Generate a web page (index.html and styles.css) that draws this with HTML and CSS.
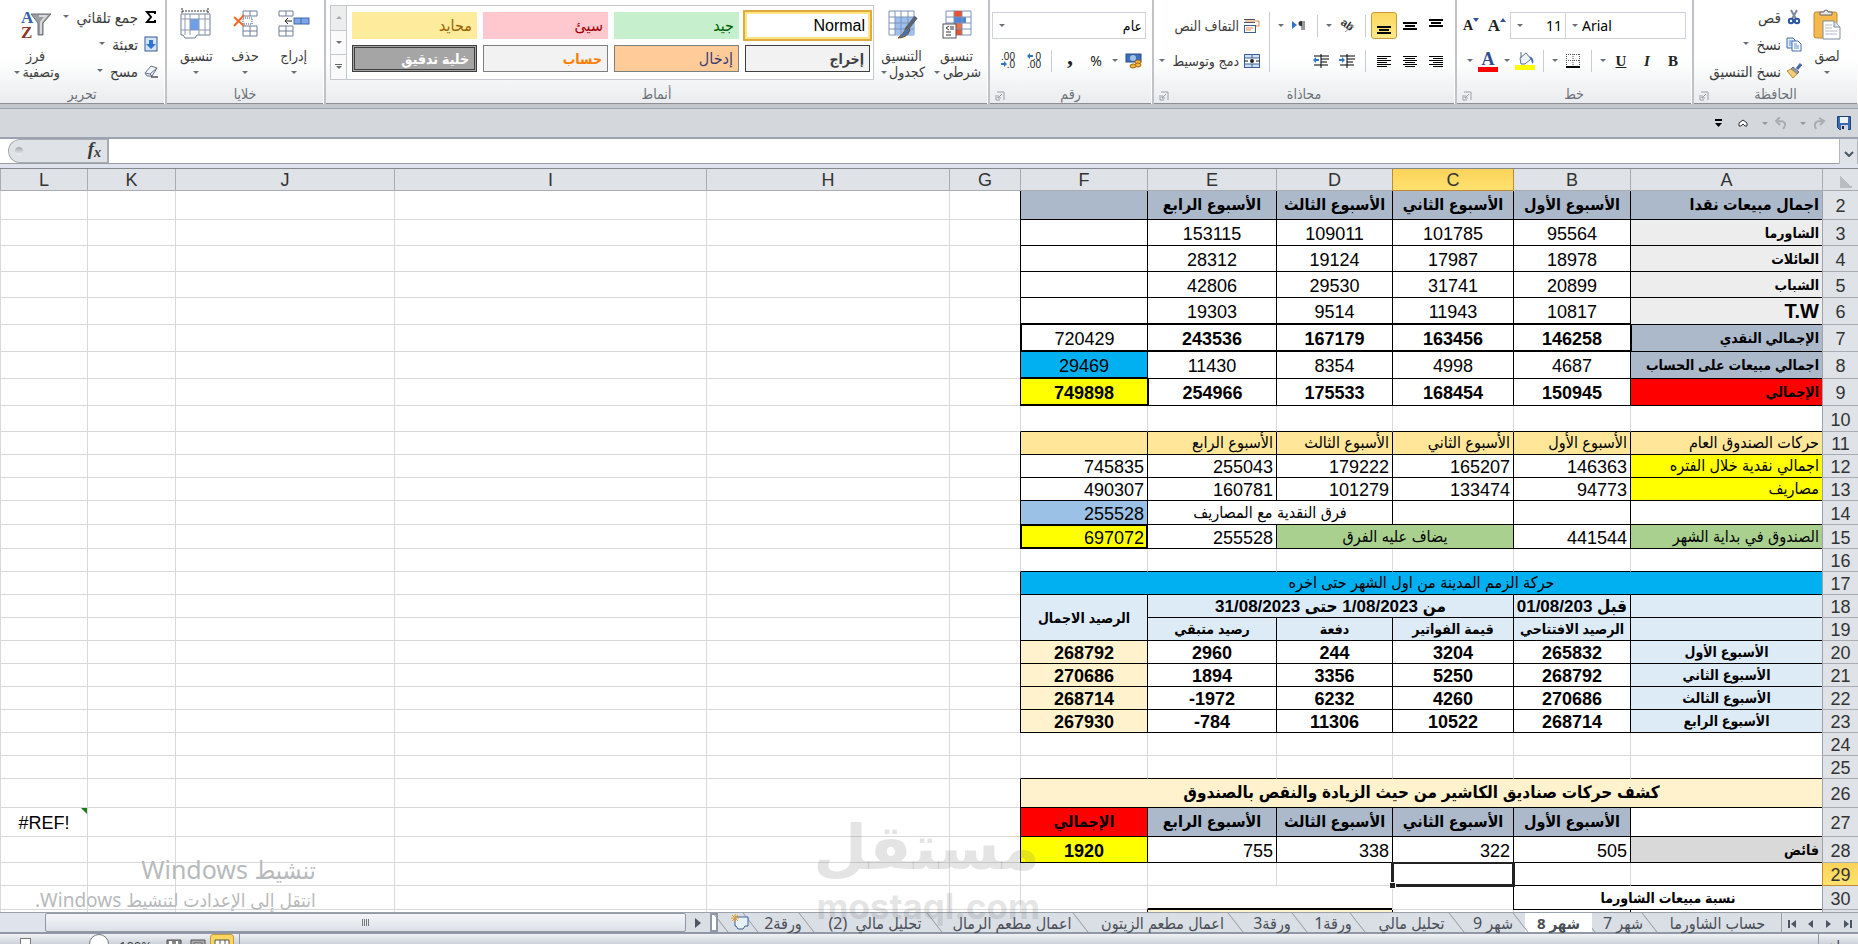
FILE: index.html
```html
<!DOCTYPE html>
<html lang="ar" dir="rtl">
<head>
  <meta charset="UTF-8">
  <meta name="viewport" content="width=device-width, initial-scale=1.0">
  <title>شهر 8</title>
  <link rel="stylesheet" href="styles.css">
</head>
<body>
  <header class="ribbon">
    <section class="group clipboard">
      <div class="group-body">
        <button class="big">
          <svg width="28" height="32" viewBox="0 0 28 32"><rect x="1" y="4" width="23" height="26" rx="2" fill="#f5b84c" stroke="#b98a3a"/><path d="M7 7V4h4a2 2 0 0 1 4 0h4v3z" fill="#e8e8e8" stroke="#666"/><path d="M10 13h11l6 6v12H10z" fill="#fff" stroke="#7d8ba0"/><path d="M21 13v6h6" fill="#dde5ee" stroke="#7d8ba0"/><path d="M12 17h7M12 20h7M12 23h12M12 26h12" stroke="#b4bcc8"/></svg>
          <span>لصق</span>
          <i class="caret"></i>
        </button>
        <div class="stack">
          <button class="small"><svg width="16" height="16" viewBox="0 0 16 16"><path d="M5 1l5 9M11 1L6 10" stroke="#7c8a9c" stroke-width="2"/><circle cx="5" cy="12" r="2.200" fill="none" stroke="#2a55a0" stroke-width="2"/><circle cx="11" cy="12" r="2.200" fill="none" stroke="#2a55a0" stroke-width="2"/></svg>قص</button>
          <button class="small"><svg width="16" height="16" viewBox="0 0 16 16"><path d="M1 2h6l2 2v8H1z" fill="#e3edf8" stroke="#3f6ca8"/><path d="M6 5h6l3 3v7H6z" fill="#fff" stroke="#3f6ca8"/><path d="M3 5h3M3 7h3M3 9h3M8 8h3M8 10h5M8 12h5" stroke="#5b8fd0"/></svg>نسخ<i class="caret"></i></button>
          <button class="small"><svg width="16" height="16" viewBox="0 0 16 16"><path d="M15 1l-4 5" stroke="#4b6aa5" stroke-width="3"/><path d="M7 4l6 5-2 2-6-5z" fill="#8f9bb0" stroke="#5c6880"/><path d="M5 6l6 5-4 4L1 8z" fill="#f2cf7a" stroke="#b98a3a"/></svg>نسخ التنسيق</button>
        </div>
      </div>
      <footer>الحافظة<svg class="launch" width="10" height="10" viewBox="0 0 10 10"><path d="M9 9V1H2M1 4v5h4M7 3L3 7M3 4v3h3" fill="none" stroke="#9a9fa6"/></svg></footer>
    </section>

    <section class="group font">
      <div class="group-body">
        <div class="rows">
          <div class="row">
            <label class="combo face"><select aria-label="خط" dir="ltr"><option>Arial</option></select></label>
            <label class="combo size"><select aria-label="حجم الخط" dir="ltr"><option>11</option></select></label>
            <button class="tool serif grow">A<svg width="6" height="4"><path d="M0 4h6L3 0z" fill="#2f5597"/></svg></button>
            <button class="tool serif shrink">A<svg width="6" height="4"><path d="M0 0h6L3 4z" fill="#2f5597"/></svg></button>
          </div>
          <div class="row">
            <button class="tool serif"><b>B</b></button>
            <button class="tool serif"><b><em>I</em></b></button>
            <button class="tool serif"><b><u>U</u></b></button>
            <i class="caret"></i><i class="sep"></i>
            <button class="tool"><svg width="14" height="14" viewBox="0 0 14 14"><path d="M.5 0v12M13.500 0v12M7 0v12M0 .5h14M0 6.500h14" stroke="#555" stroke-dasharray="1 1"/><path d="M0 13h14" stroke="#000" stroke-width="2"/></svg></button>
            <i class="caret"></i><i class="sep"></i>
            <button class="tool"><svg width="20" height="18" viewBox="0 0 20 18"><path d="M5 6l6-5 5 6-6 5H6z" fill="#eef3fa" stroke="#5a6f93"/><path d="M6 0v6" stroke="#666"/><path d="M14 4q6 2 4 8-2-2-2-5z" fill="#3d6fb8"/><rect y="13" width="20" height="5" fill="#ff0"/></svg></button>
            <i class="caret"></i>
            <button class="tool serif color-a">A</button>
            <i class="caret"></i>
          </div>
        </div>
      </div>
      <footer>خط<svg class="launch" width="10" height="10" viewBox="0 0 10 10"><path d="M9 9V1H2M1 4v5h4M7 3L3 7M3 4v3h3" fill="none" stroke="#9a9fa6"/></svg></footer>
    </section>

    <section class="group align">
      <div class="group-body">
        <div class="rows">
          <div class="row">
            <button class="tool"><svg width="14" height="14"><path d="M0 1h14M2 4h10M0 7h14" stroke="#000" stroke-width="2" shape-rendering="crispEdges"/></svg></button>
            <button class="tool"><svg width="14" height="14"><path d="M0 4h14M2 7h10M0 10h14" stroke="#000" stroke-width="2" shape-rendering="crispEdges"/></svg></button>
            <button class="tool on"><svg width="14" height="16"><path d="M0 9h14M2 12h10M0 15h14" stroke="#000" stroke-width="2" shape-rendering="crispEdges"/></svg></button>
            <i class="sep"></i>
            <button class="tool"><svg width="16" height="14" viewBox="0 0 16 14"><text x="1" y="7" font-size="11" font-weight="bold" transform="rotate(35 4 6)" fill="#333" font-family="Liberation Sans">ab</text><path d="M6 13l8-7M14 6h-3M14 6v3" stroke="#888" fill="none"/></svg></button>
            <i class="caret"></i><i class="sep"></i>
            <button class="tool"><svg width="14" height="12" viewBox="0 0 14 12"><path d="M0 1v8l5-4z" fill="#2f75c9"/><path d="M13 1H9a2 2 0 0 0 0 5h1V1z" fill="#333"/><path d="M10 1v9M12 1v9" stroke="#333"/></svg></button>
            <i class="caret"></i>
          </div>
          <div class="row">
            <button class="tool"><svg width="14" height="12"><path d="M0 1h14M4 3h10M0 5h14M4 7h10M0 9h14M4 11h10" stroke="#000" shape-rendering="crispEdges"/></svg></button>
            <button class="tool"><svg width="14" height="12"><path d="M0 1h14M2 3h10M0 5h14M2 7h10M0 9h14M2 11h10" stroke="#000" shape-rendering="crispEdges"/></svg></button>
            <button class="tool"><svg width="14" height="12"><path d="M0 1h14M0 3h10M0 5h14M0 7h10M0 9h14M0 11h10" stroke="#000" shape-rendering="crispEdges"/></svg></button>
            <i class="sep"></i>
            <button class="tool"><svg width="16" height="14" viewBox="0 0 16 14"><path d="M1 2h15M8 5h8M8 8h6M1 11h14M8 0v14" stroke="#000" stroke-width="1"/><path d="M0 5h3V3l3 3-3 3V7H0z" fill="#2f75c9"/></svg></button>
            <button class="tool"><svg width="16" height="14" viewBox="0 0 16 14"><path d="M1 2h15M8 5h8M8 8h6M1 11h14M8 0v14" stroke="#000" stroke-width="1"/><path d="M6 5H3V3L0 6l3 3V7h3z" fill="#2f75c9"/></svg></button>
          </div>
        </div>
        <i class="sep tall"></i>
        <div class="rows">
          <button class="small row"><svg width="16" height="16" viewBox="0 0 16 16"><path d="M0 1.500h11M0 4.500h11" stroke="#556" /><path d="M1 3h14v5h-3" stroke="#e0894a" fill="none"/><rect x=".5" y="7.500" width="11" height="7" fill="#fff" stroke="#3c5e94"/><path d="M2 10h7M2 12h5" stroke="#e0894a"/></svg>التفاف النص</button>
          <button class="small row"><svg width="16" height="16" viewBox="0 0 16 16"><rect x=".5" y="1.500" width="15" height="13" fill="#cfe0f5" stroke="#3c5e94"/><rect x="1" y="5" width="14" height="6" fill="#fff"/><path d="M.5 5h15M.5 11h15M8 1v4M8 11v4" stroke="#3c5e94"/><path d="M0 8h4M12 8h4" stroke="#111"/><circle cx="8" cy="8" r="2" fill="#222"/></svg>دمج وتوسيط<i class="caret"></i></button>
        </div>
      </div>
      <footer>محاذاة<svg class="launch" width="10" height="10" viewBox="0 0 10 10"><path d="M9 9V1H2M1 4v5h4M7 3L3 7M3 4v3h3" fill="none" stroke="#9a9fa6"/></svg></footer>
    </section>

    <section class="group number">
      <div class="group-body">
        <div class="rows">
          <div class="row"><label class="combo format"><select aria-label="رقم"><option>عام</option></select></label></div>
          <div class="row">
            <button class="tool"><svg width="17" height="16" viewBox="0 0 17 16"><rect x="1" y="1" width="15" height="8" fill="#3c6fb8" stroke="#2a4c86"/><circle cx="8" cy="5" r="3" fill="#9fc0e8"/><ellipse cx="13" cy="9" rx="3" ry="2" fill="#f2b33d" stroke="#a56b12"/><ellipse cx="13" cy="12" rx="3" ry="2" fill="#f2b33d" stroke="#a56b12"/><ellipse cx="8" cy="13" rx="3" ry="2" fill="#f2b33d" stroke="#a56b12"/></svg></button>
            <i class="caret"></i>
            <button class="tool">%</button>
            <button class="tool serif comma">,</button>
            <i class="sep"></i>
            <button class="tool dec"><span><svg width="6" height="6"><path d="M6 2H3V0L0 3l3 3V4h3z" fill="#2f75c9"/></svg>.0</span><span>.00</span></button>
            <button class="tool dec"><span>.00</span><span><svg width="6" height="6"><path d="M0 2h3V0l3 3-3 3V4H0z" fill="#2f75c9"/></svg>.0</span></button>
          </div>
        </div>
      </div>
      <footer>رقم<svg class="launch" width="10" height="10" viewBox="0 0 10 10"><path d="M9 9V1H2M1 4v5h4M7 3L3 7M3 4v3h3" fill="none" stroke="#9a9fa6"/></svg></footer>
    </section>

    <section class="group styles">
      <div class="group-body">
        <button class="big">
          <svg width="32" height="32" viewBox="0 0 32 32"><path d="M5 3h25v24H5z" fill="#fff" stroke="#7d93b8"/><path d="M13 3h8v24h-8z" fill="#e8542f"/><path d="M13 9h12v6H13z" fill="#4f86d6"/><path d="M13 15h8v6h-8z" fill="#f07040"/><path d="M5 9h25M5 15h25M5 21h25M13 3v24M21 3v24" stroke="#7d93b8"/><rect x="2" y="16" width="13" height="14" fill="#fff" stroke="#555"/><path d="M8 18l-3 2 3 2M5 24h5M5 27h5M9 19h4M9 21h4" fill="none" stroke="#333"/></svg>
          <span>تنسيق</span>
          <span>شرطي<i class="caret"></i></span>
        </button>
        <button class="big">
          <svg width="32" height="32" viewBox="0 0 32 32"><path d="M3 3h25v24H3z" fill="#fff" stroke="#7d93b8"/><path d="M9 9h19v18H9z" fill="#9dc0ef"/><path d="M3 9h25M3 15h25M3 21h25M9 3v24M15 3v24M22 3v24" stroke="#7d93b8"/><path d="M30 9L20 22" stroke="#5b6472" stroke-width="4"/><path d="M21 19l3 3q-3 8-12 8 5-3 9-11z" fill="#4674b8" stroke="#7a4a1d"/></svg>
          <span>التنسيق</span>
          <span>كجدول<i class="caret"></i></span>
        </button>
        <div class="gallery">
          <div class="samples">
            <button class="sample normal">Normal</button>
            <button class="sample good">جيد</button>
            <button class="sample bad">سيئ</button>
            <button class="sample neutral">محايد</button>
            <button class="sample output">إخراج</button>
            <button class="sample input">إدخال</button>
            <button class="sample calc">حساب</button>
            <button class="sample check">خلية تدقيق</button>
          </div>
          <div class="scroller">
            <button aria-label="أعلى" disabled><i class="caret up"></i></button>
            <button aria-label="أسفل"><i class="caret"></i></button>
            <button aria-label="المزيد" class="more"><i class="caret"></i></button>
          </div>
        </div>
      </div>
      <footer>أنماط</footer>
    </section>

    <section class="group cells">
      <div class="group-body">
        <button class="big">
          <svg width="32" height="32" viewBox="0 0 32 32"><path d="M1 3h14v5H1zM1 18h14v10H1zM8 3v5M8 18v10M1 23h14" fill="#fff" stroke="#6f7f98"/><rect x="16" y="10" width="15" height="6" fill="#7ba7ea" stroke="#4468a8"/><path d="M23 10v6" stroke="#4468a8"/><path d="M7 13h7M10 10l-3 3 3 3" fill="none" stroke="#222"/></svg>
          <span>إدراج</span>
          <i class="caret"></i>
        </button>
        <button class="big">
          <svg width="32" height="32" viewBox="0 0 32 32"><path d="M14 3h14v5H14zM14 18h14v10H14zM21 3v5M21 18v10M14 23h14" fill="#fff" stroke="#6f7f98"/><path d="M14 10h9v6h-9z" fill="none" stroke="#2f5597" stroke-dasharray="1 1"/><path d="M5 9l10 9M15 7L5 18" stroke="#f26a2a" stroke-width="2"/></svg>
          <span>حذف</span>
          <i class="caret"></i>
        </button>
        <button class="big">
          <svg width="32" height="32" viewBox="0 0 32 32"><path d="M2 3h26M2 0v5M28 0v5" stroke="#333" stroke-dasharray="2 1"/><path d="M1 6h29v21H17l-2 3H5l-2-3H1z" fill="#fff" stroke="#6f7f98"/><rect x="10" y="11" width="9" height="11" fill="#6ea0ea"/><path d="M1 11h29M1 22h29M10 6v21M19 6v21M25 6v21M5 6v21" stroke="#8d9ab0"/></svg>
          <span>تنسيق</span>
          <i class="caret"></i>
        </button>
      </div>
      <footer>خلايا</footer>
    </section>

    <section class="group editing">
      <div class="group-body">
        <div class="stack">
          <button class="small"><svg width="16" height="16" viewBox="0 0 16 16"><path d="M12 5V3H4l4 5-4 5h8v-2" fill="none" stroke="#000" stroke-width="2"/></svg>جمع تلقائي<i class="caret"></i></button>
          <button class="small"><svg width="16" height="16" viewBox="0 0 16 16"><rect x="2" y="1" width="12" height="14" fill="#d5e5f8" stroke="#35599b"/><path d="M6 4h4v4h3l-5 5-5-5h3z" fill="#2f75d0"/></svg>تعبئة<i class="caret"></i></button>
          <button class="small"><svg width="16" height="16" viewBox="0 0 16 16"><path d="M2 10l6-7 6 2-5 8H4z" fill="#f3f5fb" stroke="#66708a"/><path d="M2 10l5 1 7-6M7 11l2 2" fill="none" stroke="#66708a"/><path d="M8 14h7" stroke="#000"/></svg>مسح<i class="caret"></i></button>
        </div>
        <button class="big">
          <svg width="32" height="32" viewBox="0 0 32 32"><path d="M11 6h20l-8 9v12h-5V15z" fill="#9a9da2" stroke="#6b6e73"/><path d="M19 8h7l-5 6v12" fill="none" stroke="#d8dadd" stroke-width="2"/><text x="1" y="15" font-family="Liberation Serif" font-weight="bold" font-size="17" fill="#2f5fae">A</text><text x="1" y="30" font-family="Liberation Serif" font-weight="bold" font-size="17" fill="#8c3a2b">Z</text></svg>
          <span>فرز</span>
          <span>وتصفية<i class="caret"></i></span>
        </button>
      </div>
      <footer>تحرير</footer>
    </section>
  </header>

  <nav class="quick">
    <button aria-label="حفظ"><svg width="14" height="14" viewBox="0 0 14 14"><path d="M.5.5h13v13h-11l-2-2z" fill="#3b6cb3" stroke="#1f3f75"/><rect x="3" y="1" width="8" height="6" fill="#eef4fb"/><rect x="4" y="9" width="7" height="5" fill="#cfd6e0"/><rect x="5" y="10" width="2" height="3" fill="#223"/></svg></button>
    <button aria-label="إعادة"><svg width="13" height="13" viewBox="0 0 13 13"><path d="M3 12Q-1 3 10 4M6 1l5 3-4 4" fill="none" stroke="#a9adb3" stroke-width="2"/></svg></button>
    <i class="caret"></i>
    <button aria-label="تراجع"><svg width="13" height="13" viewBox="0 0 13 13"><path d="M8 12Q14 4 3 4M5 0L1 4l4 4" fill="none" stroke="#a9adb3" stroke-width="2"/></svg></button>
    <i class="caret"></i>
    <button aria-label="أعلى"><svg width="10" height="8" viewBox="0 0 10 8"><path d="M1 4l4-3 4 3v3H7L5 5 3 7H1z" fill="#fff" stroke="#333"/></svg></button>
    <button aria-label="تخصيص"><svg width="7" height="8"><path d="M0 1h7" stroke="#000" stroke-width="2"/><path d="M0 4h7L3.500 8z"/></svg></button>
  </nav>

  <div class="formula">
    <button class="expand" aria-label="توسيع"><svg width="10" height="6"><path d="M1 1l4 4 4-4" fill="none" stroke="#4c5563" stroke-width="2"/></svg></button>
    <input type="text" aria-label="شريط الصيغة">
    <div class="fx"><button>f<sub>x</sub></button><span class="knob"></span></div>
  </div>

  <main class="sheet">
    <table>
      <colgroup>
        <col class="c-head"><col class="c-a"><col class="c-b"><col class="c-c"><col class="c-d"><col class="c-e"><col class="c-f">
        <col class="c-g"><col class="c-h"><col class="c-i"><col class="c-j"><col class="c-k"><col>
      </colgroup>
      <thead>
        <tr><th class="corner"></th><th>A</th><th>B</th><th class="picked">C</th><th>D</th><th>E</th><th>F</th><th>G</th><th>H</th><th>I</th><th>J</th><th>K</th><th>L</th></tr>
      </thead>
      <tbody id="grid"></tbody>
    </table>
    <div class="activate"><p>تنشيط Windows</p><p>انتقل إلى الإعدادت لتنشيط Windows.</p></div>
  </main>

  <div class="tabbar">
    <div class="nav">
      <button aria-label="الأول"><svg width="8" height="8"><path d="M0 0l5 4-5 4zM6 0h2v8H6z" fill="#4c5563"/></svg></button>
      <button aria-label="السابق"><svg width="6" height="8"><path d="M0 0l5 4-5 4z" fill="#4c5563"/></svg></button>
      <button aria-label="التالي"><svg width="6" height="8"><path d="M5 0L0 4l5 4z" fill="#4c5563"/></svg></button>
      <button aria-label="الأخير"><svg width="8" height="8"><path d="M8 0L3 4l5 4zM0 0h2v8H0z" fill="#4c5563"/></svg></button>
    </div>
    <div class="tabs">
      <button>حساب الشاورما</button>
      <button>شهر 7</button>
      <button class="active">شهر 8</button>
      <button>شهر 9</button>
      <button>تحليل مالي</button>
      <button>ورقة1</button>
      <button>ورقة3</button>
      <button>اعمال مطعم الزيتون</button>
      <button>اعمال مطعم الرمال</button>
      <button>تحليل مالي&nbsp; (2)</button>
      <button>ورقة2</button>
      <button aria-label="ورقة جديدة"><svg width="18" height="16" viewBox="0 0 18 16"><path d="M4 3h13v9h-3l-2 3H7l-2-3H4z" fill="#e8f0fb" stroke="#3f5f96"/><path d="M4 0v8M0 4h8M1 1l6 6M7 1L1 7" stroke="#e29a2d"/></svg></button>
    </div>
    <div class="hscroll">
      <span class="split"></span>
      <button aria-label="يمين"><svg width="6" height="10"><path d="M0 0l6 5-6 5z" fill="#4c5563"/></svg></button>
      <div class="track"><span class="thumb"></span></div>
    </div>
  </div>

  <footer class="status">
    <span class="ready">جاهز</span>
    <div class="zoom">
      <i class="bar"></i>
      <button class="view on"><svg width="16" height="12"><path d="M1 1h14v11H1zM6 1v11M11 1v11M1 6h14" fill="#fff" stroke="#555"/></svg></button>
      <button class="view"><svg width="16" height="12"><path d="M1 1h14v11H1z" fill="#aaa" stroke="#555"/><path d="M4 4h8v8H4z" fill="#fff" stroke="#555"/></svg></button>
      <button class="view"><svg width="16" height="12"><path d="M1 1h14v11H1z" fill="#888" stroke="#555"/><path d="M3 2h3v10H3zM10 2h2v10h-2z" fill="#fff"/></svg></button>
      <span class="pct">100%</span>
      <button class="round" aria-label="تصغير"></button>
      <span class="handle"></span>
    </div>
  </footer>

  <div class="mark"><p>مستقل</p><p>mostaql.com</p></div>

  <script src="sheet.js"></script>
</body>
</html>
```

FILE: styles.css
```css
* {
  box-sizing: border-box;
}

body {
  margin: 0;
  height: 100vh;
  overflow: hidden;
  display: flex;
  flex-direction: column;
  background: #fff;
  color: #3b3b3b;
  font-family: "Noto Sans", "DejaVu Sans Condensed", "DejaVu Sans", sans-serif;
  font-size: 14px;
  line-height: 16px;
}

button,
input,
select {
  font: inherit;
  color: inherit;
  background: none;
  border: 0;
  padding: 0;
  margin: 0;
}

p {
  margin: 0;
}

svg {
  flex: none;
  direction: ltr;
}

.caret {
  flex: none;
  width: 11px;
  display: inline-flex;
  justify-content: center;
}

.caret::before {
  content: "";
  border: 3px solid transparent;
  border-top: 3px solid #6a6e75;
  border-bottom: 0;
}

.caret.up::before {
  border-top: 0;
  border-bottom: 3px solid #a5a8ad;
}

.sep {
  flex: none;
  width: 11px;
  height: 22px;
  background: linear-gradient(#c9ccd1, #c9ccd1) center / 1px 100% no-repeat;
}

.sep.tall {
  height: 60px;
  margin: 12px 0 0 4px;
}

/* Ribbon */
.ribbon {
  flex: none;
  display: flex;
  height: 108px;
  background: linear-gradient(#fff 0, #fff 60px, #e9ebee 104px);
  border-bottom: 4px solid #c3c6cb;
  box-shadow: inset 0 -1px #8c9096;
}

.group {
  flex: none;
  display: flex;
  flex-direction: column;
  border-left: 2px solid #bfc2c7;
  border-right: 1px solid #fff;
}

.clipboard { width: 166px; }
.font { width: 237px; }
.align { width: 303px; }
.number { width: 164px; }
.styles { flex: 1; }
.cells { width: 159px; }
.editing { width: 165px; border-left: 0; }

.group-body {
  flex: 1;
  display: flex;
  padding: 0 5px;
}

.group > footer {
  position: relative;
  height: 18px;
  color: #6b7077;
  text-align: center;
}

.launch {
  position: absolute;
  left: 5px;
  top: 5px;
}

.big {
  width: 50px;
  padding-top: 8px;
  display: flex;
  flex-direction: column;
  align-items: center;
  white-space: nowrap;
}

.big svg {
  margin-bottom: 8px;
}

.big > .caret {
  margin-top: 7px;
}

.big span {
  display: flex;
  align-items: center;
}

.stack {
  display: flex;
  flex-direction: column;
  padding-top: 3px;
  font-size: 15px;
}

.small {
  display: flex;
  align-items: center;
  gap: 5px;
  height: 27px;
  white-space: nowrap;
}

.rows {
  display: flex;
  flex-direction: column;
  gap: 8px;
  padding-top: 12px;
}

.row {
  display: flex;
  align-items: center;
  height: 27px;
}

.tool {
  width: 26px;
  height: 27px;
  display: flex;
  align-items: center;
  justify-content: center;
  color: #222;
}

.tool.on {
  background: linear-gradient(#fbd75f, #ffe98a);
  border: 1px solid #c79a3a;
  border-radius: 3px;
}

.serif {
  font-family: "Liberation Serif", serif;
  font-size: 15px;
}

.grow, .shrink {
  direction: ltr;
  align-items: center;
  font-weight: bold;
}

.grow { font-size: 17px; }
.shrink { font-size: 14px; }

.grow svg, .shrink svg {
  align-self: flex-start;
  margin-top: 6px;
}

.color-a {
  font-size: 18px;
  font-weight: bold;
  color: #2f4f8f;
  line-height: 14px;
  background: linear-gradient(#f00, #f00) center 20px / 20px 5px no-repeat;
  align-items: flex-start;
  padding-top: 5px;
}

.comma {
  font-size: 24px;
  font-weight: bold;
  line-height: 8px;
  padding-bottom: 10px;
}

.dec {
  flex-direction: column;
  direction: ltr;
  align-items: flex-end;
  padding-right: 5px;
  font-family: "Liberation Sans", sans-serif;
  font-size: 10px;
  line-height: 8px;
}

.dec span {
  display: flex;
}

.combo {
  position: relative;
  height: 27px;
  border: 1px solid #d0d3d9;
  background: #fff;
  color: #000;
}

.combo::before {
  content: "";
  position: absolute;
  left: 6px;
  top: 11px;
  border: 3px solid transparent;
  border-top-color: #6a6e75;
  border-bottom: 0;
}

.combo select {
  appearance: none;
  width: 100%;
  height: 100%;
  padding: 0 3px 0 16px;
}

.face { width: 121px; }
.size { width: 55px; border-right: 0; }
.size select { text-align: right; }
.format { width: 154px; }

/* Cell style gallery */
.styles .group-body {
  padding: 0 3px;
}

.styles .big {
  width: 55px;
}

.gallery {
  display: flex;
  height: 75px;
  margin-top: 5px;
}

.samples {
  width: 527px;
  display: grid;
  grid-template-columns: repeat(4, 125px);
  grid-auto-rows: 27px;
  gap: 6px;
  padding: 6px 3px 0 5px;
  background: #fff;
  border: 1px solid #c5c8cc;
  border-left: 0;
}

.sample {
  font-family: "Liberation Sans", "DejaVu Sans Condensed", sans-serif;
  font-size: 16px;
  text-align: right;
  padding: 0 5px;
}

.normal { color: #000; outline: 2px solid #e0aa3e; box-shadow: inset 0 0 0 2px #ffe57f; }
.good { background: #c6efce; color: #006100; }
.bad { background: #ffc7ce; color: #9c0006; }
.neutral { background: #ffeb9c; color: #9c6500; }
.output { background: #f2f2f2; color: #3f3f3f; border: 1px solid #3f3f3f; font-weight: bold; }
.input { background: #fc9; color: #3f3f76; border: 1px solid #7f7f7f; }
.calc { background: #f2f2f2; color: #fa7d00; border: 1px solid #7f7f7f; font-weight: bold; }
.check { background: #a5a5a5; color: #fff; border: 3px double #3f3f3f; font-weight: bold; }

.output, .calc, .check {
  font-size: 14px;
}

.scroller {
  width: 17px;
  display: flex;
  flex-direction: column;
}

.scroller button {
  flex: 1;
  display: flex;
  align-items: center;
  justify-content: center;
  background: #fafafb;
  border: 1px solid #c5c8cc;
  margin-bottom: -1px;
}

.scroller button:disabled {
  background: #eceded;
}

.scroller .more {
  background: linear-gradient(#666, #666) center 9px / 7px 1px no-repeat, #fafafb;
  margin-bottom: 0;
}

/* Quick access bar */
.quick {
  flex: none;
  display: flex;
  align-items: center;
  height: 31px;
  padding: 0 7px;
  background: #d4d7dc;
  border-top: 1px solid #9ba3ae;
  border-bottom: 2px solid #9aa3af;
}

.quick button {
  width: 14px;
  display: flex;
  justify-content: center;
}

.quick button + button {
  margin-right: 11px;
}

.quick .caret {
  opacity: .6;
  margin: 0 4px;
}

.quick .caret + button {
  margin-right: 5px;
}

/* Formula bar */
.formula {
  flex: none;
  display: flex;
  height: 29px;
  background: #fff;
  border-bottom: 4px solid #dfe3ee;
  box-shadow: inset 0 -1px #9a9da2;
}

.formula input {
  flex: 1;
  margin-bottom: 1px;
}

.expand {
  width: 19px;
  background: #dfe2e7;
  border-right: 1px solid #b3b6bb;
  border-left: 1px solid #b3b6bb;
}

.fx {
  width: 101px;
  margin: 0 0 1px 8px;
  display: flex;
  align-items: center;
  justify-content: space-between;
  padding: 0 6px;
  background: #dfe2e7;
  border: 1px solid #a8acb1;
  border-right: 2px solid #a8acb1;
  border-radius: 12px 0 0 12px;
}

.fx button {
  direction: ltr;
  font: italic bold 19px/20px "Liberation Serif", serif;
}

.fx sub {
  font-size: 14px;
  vertical-align: -2px;
}

.knob {
  width: 8px;
  height: 8px;
  border-radius: 4px;
  background: linear-gradient(#a3a6aa, #f1f2f3);
}

/* Worksheet */
.sheet {
  flex: 1;
  min-height: 0;
  position: relative;
  overflow: hidden;
  border-top: 1px solid #84898f;
}

table {
  width: 100%;
  table-layout: fixed;
  border-collapse: separate;
  border-spacing: 0;
  font-family: "Liberation Sans", "DejaVu Sans Condensed", "DejaVu Sans", sans-serif;
  font-size: 18px;
  line-height: 20px;
  color: #000;
}

.c-head { width: 36px; }
.c-a { width: 192px; }
.c-b { width: 117px; }
.c-c { width: 121px; }
.c-d { width: 116px; }
.c-e { width: 129px; }
.c-f { width: 127px; }
.c-g { width: 71px; }
.c-h { width: 243px; }
.c-i { width: 312px; }
.c-j { width: 219px; }
.c-k { width: 88px; }

th {
  padding: 0;
  font-weight: normal;
  color: #333;
  background: #dfe2e7;
  border-left: 1px solid #a9adb3;
  border-bottom: 1px solid #a9adb3;
}

thead th {
  height: 22px;
}

tbody th {
  padding-top: 2px;
  border-left: 1px solid #9ea2a8;
}

.corner {
  background: linear-gradient(45deg, #b9bcc1 50%, transparent 50%) 17px 6px / 13px 13px no-repeat, #dfe2e7;
}

.picked {
  background: linear-gradient(#fbd35a, #ffe26f);
  border-color: #c08a34;
  box-shadow: 1px 0 #c08a34;
}

td {
  position: relative;
  padding: 2px 3px 0;
  border-left: 1px solid #d8d9db;
  border-bottom: 1px solid #d8d9db;
  text-align: center;
  white-space: nowrap;
  overflow: hidden;
  unicode-bidi: plaintext;
}

.b { border-color: #000; }
.ub { border-bottom-color: #000; }
.lb { border-left-color: #000; }
.r { text-align: right; }
.bold { font-weight: bold; }
.ar { font-size: 16px; padding-top: 0; }
.ar.bold { font-size: 14px; }
.head { font-size: 16px; font-weight: bold; padding-top: 0; }
.title, .date { font-size: 17px; }
.tw { font-size: 20px; padding-top: 0; }
.thick-b { border-bottom: 2px solid #000; }
.thick-l { border-left: 2px solid #000; }

.slate { background: #acb9ca; }
.gray { background: #ededed; }
.gray2 { background: #d9d9d9; }
.red { background: #f00; }
.yellow { background: #ff0; }
.cyan { background: #00b0f0; }
.gold { background: #ffe699; }
.blue { background: #9bc2e6; }
.green { background: #a9d08e; }
.pale { background: #ddebf7; }
.cream { background: #fff2cc; }

.thick-box {
  box-shadow: inset 1px 1px #000, inset -1px -1px #000;
}

.cursor {
  overflow: visible;
}

.cursor::before {
  content: "";
  position: absolute;
  inset: -1px -2px -2px -2px;
  border: 3px solid #222;
  border-top-width: 2px;
  z-index: 1;
}

.cursor::after {
  content: "";
  position: absolute;
  left: -3px;
  bottom: -3px;
  width: 5px;
  height: 5px;
  background: #222;
  outline: 1px solid #fff;
  z-index: 2;
}

.error::before {
  content: "";
  position: absolute;
  right: 0;
  top: 0;
  border-top: 6px solid #1c7a1c;
  border-left: 6px solid transparent;
}

.activate {
  position: absolute;
  left: 35px;
  bottom: 0;
  color: #b7b9bc;
  font-size: 19px;
  line-height: 24px;
}

.activate p:first-child {
  font-size: 25px;
  line-height: 38px;
}

/* Sheet tabs */
.tabbar {
  flex: none;
  display: flex;
  height: 22px;
  background: #dadee5;
  border-top: 1px solid #9aa1ab;
  border-bottom: 2px solid #8f98a4;
  color: #4a4e57;
}

.nav {
  width: 77px;
  display: flex;
  align-items: center;
  justify-content: space-around;
  border-left: 1px solid #9aa1ab;
}

.tabs {
  display: grid;
  grid-template-columns: 127px 62px 67px 64px 99px 58px 64px 155px 146px 128px 56px 30px;
  font-size: 16px;
}

.tabs button {
  position: relative;
  white-space: nowrap;
}

.tabs button::after {
  content: "";
  position: absolute;
  left: -5px;
  top: 0;
  height: 19px;
  border-left: 1px solid #8f98a4;
  transform: skewX(38deg);
}

.tabs .active {
  background: #fff;
  font-weight: bold;
  font-size: 15px;
}

.hscroll {
  flex: 1;
  display: flex;
  align-items: stretch;
  gap: 9px;
  padding-right: 7px;
}

.split {
  width: 8px;
  background: #fff;
  border: 2px solid #8f98a4;
}

.track {
  flex: 1;
  display: flex;
  background: #dfe3ec;
}

.thumb {
  width: 641px;
  border: 1px solid #8f98a4;
  border-radius: 2px;
  background: repeating-linear-gradient(90deg, #777 0 1px, transparent 1px 2px) center / 7px 7px no-repeat, linear-gradient(#f3f5f8, #dde1e8);
}

/* Status bar */
.status {
  flex: none;
  display: flex;
  justify-content: space-between;
  align-items: flex-start;
  height: 10px;
  overflow: hidden;
  background: linear-gradient(#f0f2f5, #cdd2da);
}

.ready {
  padding: 4px 10px 0 4px;
  border-left: 1px solid #8f98a4;
}

.zoom {
  display: flex;
  align-items: flex-start;
  padding-left: 20px;
}

.bar {
  width: 1px;
  height: 10px;
  background: #8f98a4;
  margin-left: 5px;
}

.view {
  width: 24px;
  height: 20px;
  display: flex;
  justify-content: center;
  padding-top: 5px;
}

.view.on {
  background: #fbd75f;
  border: 1px solid #c79a3a;
  border-radius: 3px;
  padding-top: 4px;
}

.pct {
  padding-top: 4px;
  margin: 0 10px;
  font-size: 13px;
}

.round {
  width: 20px;
  height: 20px;
  border: 1px solid #777;
  border-radius: 10px;
  background: #fff;
}

.handle {
  width: 11px;
  height: 12px;
  margin: 4px 58px 0 0;
  background: #fff;
  border: 1px solid #777;
}

/* Site watermark */
.mark {
  position: absolute;
  left: 817px;
  bottom: 16px;
  width: 223px;
  color: rgba(120, 120, 120, .2);
  font-family: Inter, sans-serif;
  font-size: 35px;
  line-height: 44px;
  font-weight: bold;
  text-align: center;
  pointer-events: none;
}

.mark p:first-child {
  font-family: "DejaVu Sans", sans-serif;
  font-size: 62px;
  line-height: 72px;
}
```

FILE: sheet.js
```javascript
// One entry per row: [number, height, [[text, classes, colspan, rowspan], ...]]
// Columns that are left out are filled with plain grid cells.
const COLS = 12;

const weeks = ['الأسبوع الأول', 'الأسبوع الثاني', 'الأسبوع الثالث', 'الأسبوع الرابع'];
const fill = (list, cls) => list.map(text => [text, cls]);

const rows = [
  [2, 29, [['اجمال مبيعات نقدا', 'b r head slate'], ...fill(weeks, 'b head slate'), ['', 'b slate']]],
  [3, 26, [['الشاورما', 'b r bold ar gray'], ...fill(['95564', '101785', '109011', '153115', ''], 'b')]],
  [4, 26, [['العائلات', 'b r bold ar gray'], ...fill(['18978', '17987', '19124', '28312', ''], 'b')]],
  [5, 26, [['الشباب', 'b r bold ar gray'], ...fill(['20899', '31741', '29530', '42806', ''], 'b')]],
  [6, 27, [['T.W', 'b r bold tw gray'], ...fill(['10817', '11943', '9514', '19303', ''], 'b thick-b')]],
  [7, 27, [['الإجمالي النقدي', 'b r bold ar slate thick-l'], ...fill(['146258', '163456', '167179', '243536'], 'b bold thick-b'), ['720429', 'b thick-b thick-l']]],
  [8, 27, [['اجمالي مبيعات على الحساب', 'b r bold ar slate'], ...fill(['4687', '4998', '8354', '11430'], 'b'), ['29469', 'b cyan thick-b']]],
  [9, 27, [['الإجمالي', 'b r bold ar red'], ...fill(['150945', '168454', '175533'], 'b bold'), ['254966', 'b bold thick-l'], ['749898', 'b bold yellow thick-b']]],
  [10, 26, fill(['', '', '', '', '', ''], 'ub')],
  [11, 23, [['حركات الصندوق العام', 'b r ar gold'], ...fill(weeks, 'b r ar gold'), ['', 'b gold']]],
  [12, 23, [['اجمالي نقدية خلال الفتره', 'b r ar yellow'], ...fill(['146363', '165207', '179222', '255043', '745835'], 'b r')]],
  [13, 23, [['مصاريف', 'b r ar yellow'], ...fill(['94773', '133474', '101279', '160781', '490307'], 'b r')]],
  [14, 24, [['', 'b'], ['', 'b'], ['', 'b'], ['فرق النقدية مع المصاريف', 'b ar', 2], ['255528', 'b r blue']]],
  [15, 24, [['الصندوق في بداية الشهر', 'b r ar green'], ['441544', 'b r'], ['يضاف عليه الفرق', 'b ar green', 2], ['255528', 'b r'], ['697072', 'b r yellow thick-box']]],
  [16, 23, fill(['', '', '', '', '', ''], 'ub')],
  [17, 23, [['حركة الزمم المدينة من اول الشهر حتى اخره', 'b ar cyan', 6]]],
  [18, 23, [['', 'b pale'], ['قبل 01/08/203', 'b bold date pale'], ['من 1/08/2023 حتى 31/08/2023', 'b bold date pale', 3], ['الرصيد الاجمال', 'b bold ar pale', 1, 2]]],
  [19, 23, [['', 'b pale'], ...fill(['الرصيد الافتتاحي', 'قيمة الفواتير', 'دفعة', 'رصيد متبقي'], 'b bold ar pale')], 1],
  [20, 23, [[weeks[0], 'b bold ar pale'], ...fill(['265832', '3204', '244', '2960'], 'b bold'), ['268792', 'b bold cream']]],
  [21, 23, [[weeks[1], 'b bold ar pale'], ...fill(['268792', '5250', '3356', '1894'], 'b bold'), ['270686', 'b bold cream']]],
  [22, 23, [[weeks[2], 'b bold ar pale'], ...fill(['270686', '4260', '6232', '-1972'], 'b bold'), ['268714', 'b bold cream']]],
  [23, 23, [[weeks[3], 'b bold ar pale'], ...fill(['268714', '10522', '11306', '-784'], 'b bold'), ['267930', 'b bold cream']]],
  [24, 23, []],
  [25, 23, fill(['', '', '', '', '', ''], 'ub')],
  [26, 29, [['كشف حركات صناديق الكاشير من حيث الزيادة والنقص بالصندوق', 'b head title cream', 6]]],
  [27, 29, [['', 'b'], ...fill(weeks, 'b head slate'), ['الإجمالي', 'b head red'], ...fill(['', '', '', '', ''], ''), ['#REF!', 'error']]],
  [28, 26, [['فائض', 'b r bold ar gray2'], ...fill(['505', '322', '338', '755'], 'b r'), ['1920', 'b bold yellow']]],
  [29, 23, [['', 'ub'], ['', 'ub'], ['', 'cursor']]],
  [30, 24, [['نسبة مبيعات الشاورما', 'b bold ar', 2], ['', ''], ['', 'thick-b', 2]]],
  [31, 23, [['', 'lb'], ['', ''], ['', 'lb'], ['', 'lb cream', 2]]]
];

const grid = document.getElementById('grid');

rows.forEach(([number, height, cells, covered = 0]) => {
  const tr = document.createElement('tr');
  tr.style.height = height + 'px';

  const th = document.createElement('th');
  th.textContent = number;
  th.scope = 'row';
  if (number === 29) th.className = 'picked';
  tr.append(th);

  let used = covered;
  const addCell = ([text, cls, colspan = 1, rowspan = 1]) => {
    const td = document.createElement('td');
    td.textContent = text;
    td.className = cls;
    td.colSpan = colspan;
    td.rowSpan = rowspan;
    tr.append(td);
    used += colspan;
  };

  cells.forEach(addCell);
  while (used < COLS) addCell(['', '']);
  grid.append(tr);
});
```
